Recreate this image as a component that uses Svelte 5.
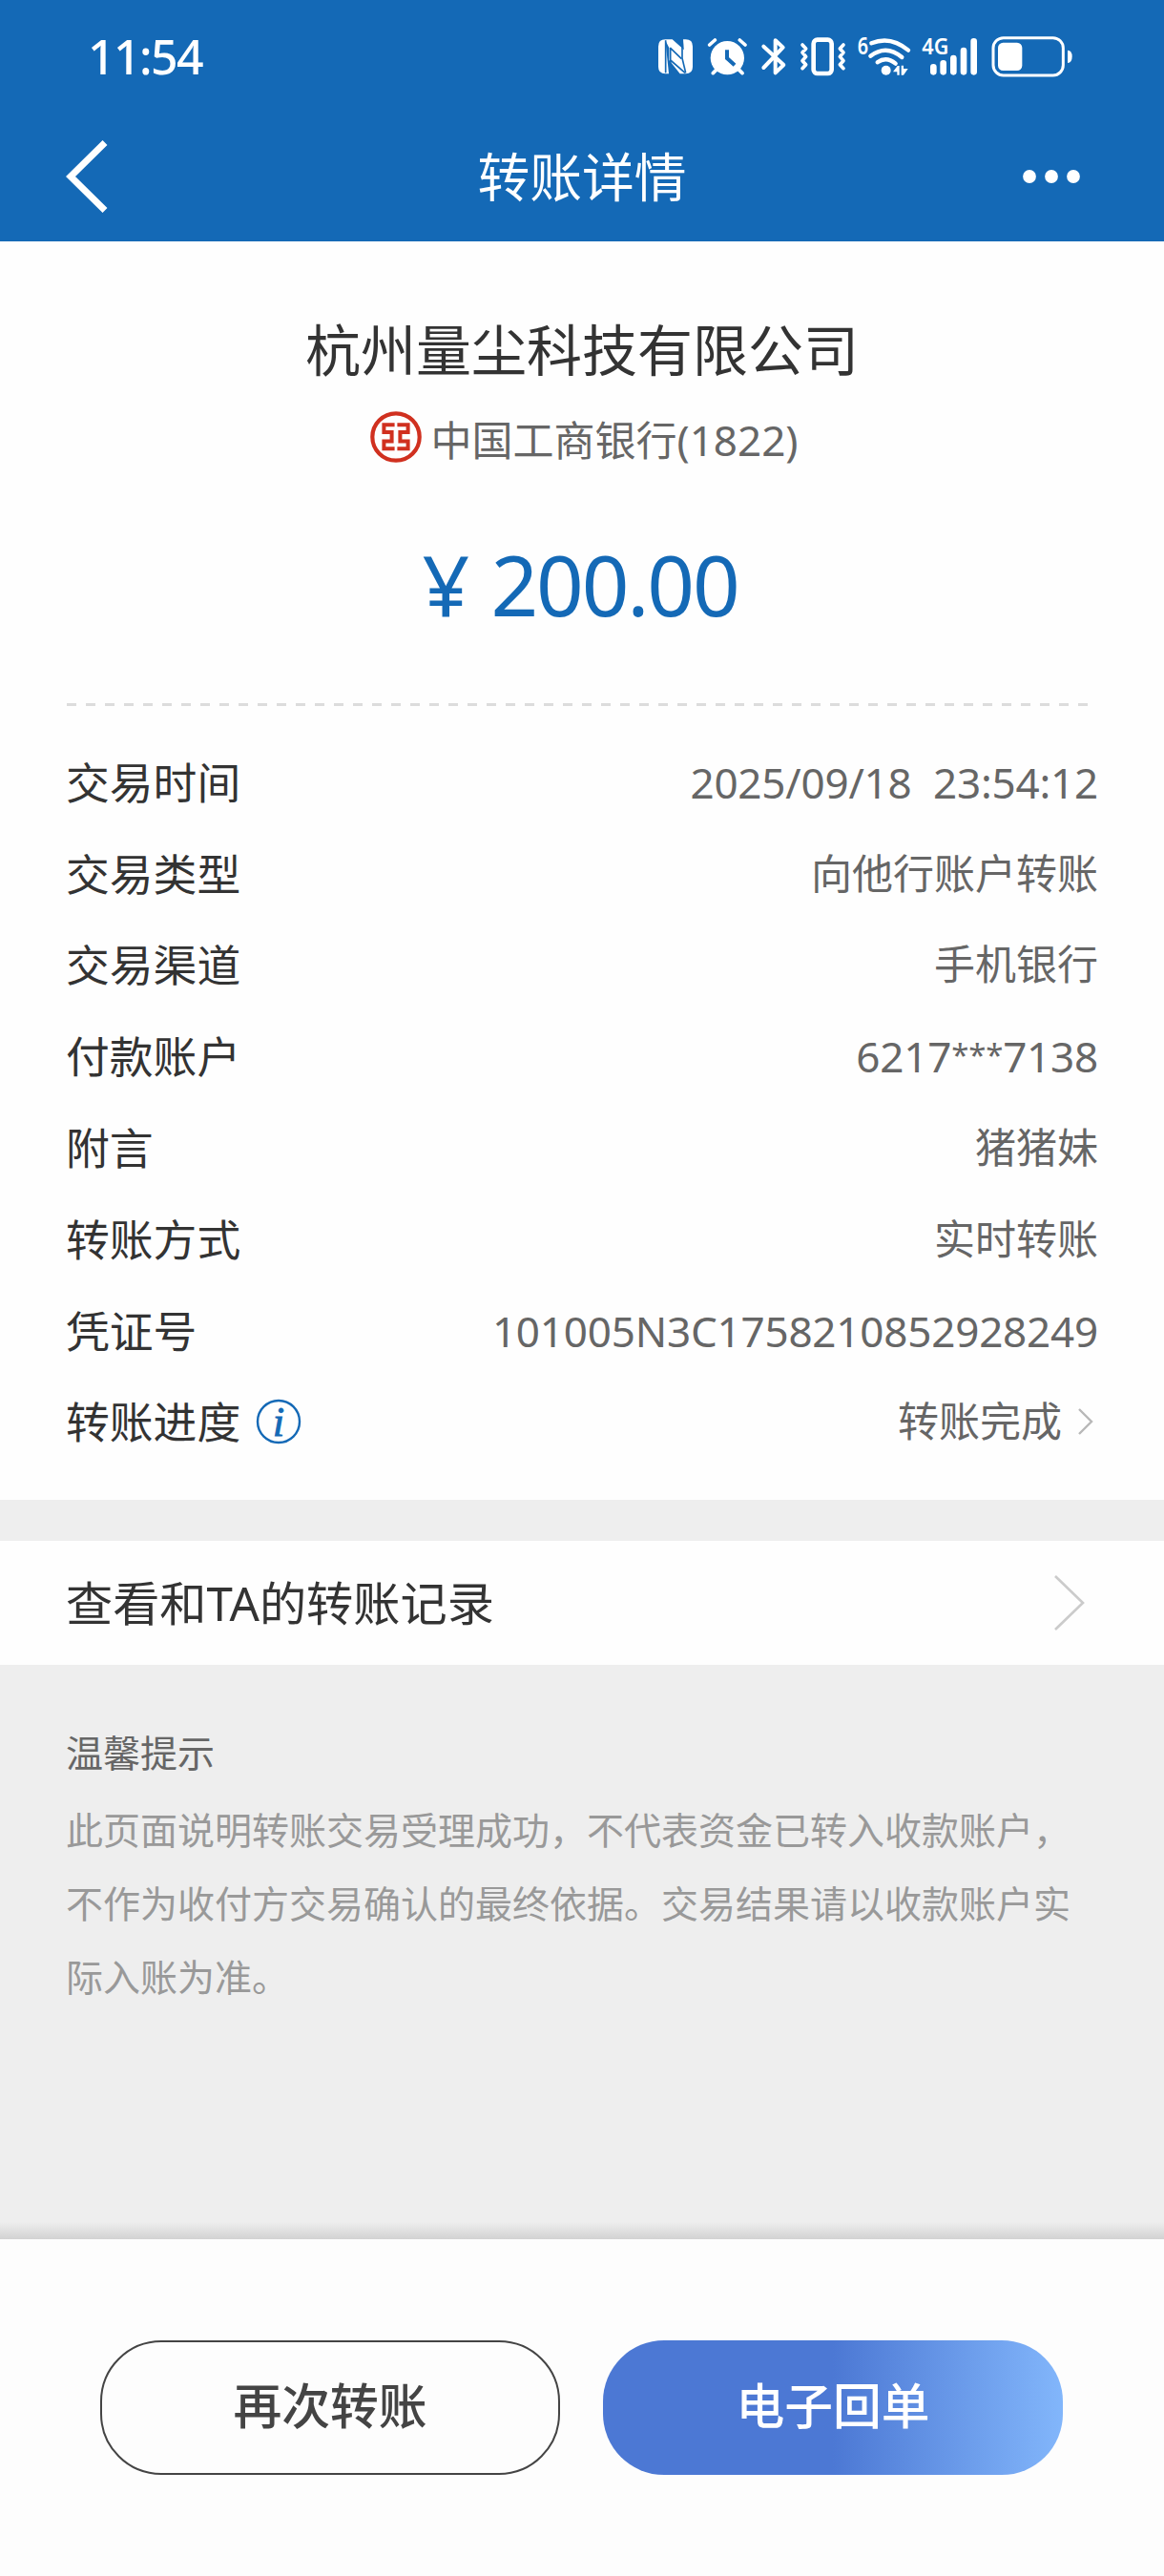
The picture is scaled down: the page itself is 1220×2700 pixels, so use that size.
<script lang="ts">
    type Row = { label: string; value: string; kind?: string };

    const rows: Row[] = [
        { label: "交易时间", value: "2025/09/18  23:54:12", kind: "date" },
        { label: "交易类型", value: "向他行账户转账" },
        { label: "交易渠道", value: "手机银行" },
        { label: "付款账户", value: "6217***7138", kind: "number" },
        { label: "附言", value: "猪猪妹" },
        { label: "转账方式", value: "实时转账" },
        { label: "凭证号", value: "101005N3C1758210852928249", kind: "number" },
    ];

    // keep masked digits apart so they can be set smaller
    function splitMask(value: string) {
        return value.split(/(\*+)/);
    }
</script>

<div class="screen">
    <header class="top">
        <div class="status-bar">
            <span class="clock">11:54</span>
            <svg class="status-icons" viewBox="90 35 1302 162" fill="none" stroke="#fff">
                <!-- nfc -->
                <g stroke="none" fill="#fff">
                    <path d="M112 63H134L176 100V171H158L124 128V90L112 66V171Q90 171 90 149V85Q90 63 112 63Z" />
                    <path d="M112 64L123 171H112Z" />
                    <path d="M168 63H176Q198 63 198 85V149Q198 171 176 171Z" />
                </g>
                <path d="M113 66V168M128 88V166M128 90L163 124M128 128L174 168" stroke="#1469b6" stroke-width="5" />
                <path d="M165 64V122L176 168" stroke="#1469b6" stroke-width="5" />
                <!-- alarm -->
                <circle cx="307" cy="121" r="53" fill="#fff" stroke="none" />
                <path d="M251 80L268 65M363 80L346 65M262 169L274 157M354 169L342 157" stroke-width="11" stroke-linecap="round" />
                <path d="M306 96V122L330 144" stroke="#1469b6" stroke-width="12" />
                <!-- bluetooth -->
                <path d="M421 85L484 143L458 168V66L482 88L421 152" stroke-width="12" stroke-linejoin="round" stroke-linecap="round" />
                <!-- vibrate -->
                <rect x="578" y="64" width="57" height="106" rx="12" stroke-width="14" />
                <path d="M543 80L554 92L543 104L554 117L543 130L554 142L543 154M672 80L661 92L672 104L661 117L672 130L661 142L672 154" stroke-width="11" stroke-linecap="round" stroke-linejoin="round" />
                <!-- wifi -->
                <text class="tiny" x="716" y="110" font-size="76" textLength="34" lengthAdjust="spacingAndGlyphs">6</text>
                <path d="M760 75Q820 50 876 97M757 115Q807 77 856 119M779 135Q807 115 836 139" stroke-width="13" stroke-linecap="round" />
                <circle cx="806" cy="160" r="15" fill="#fff" stroke="none" />
                <path d="M828 165L842 146H848V175H841V165ZM854 145H861V155H875L861 175H854Z" fill="#fff" stroke="none" />
                <!-- signal -->
                <text class="tiny" x="919" y="111" font-size="72" textLength="84" lengthAdjust="spacingAndGlyphs">4G</text>
                <path d="M955 150V165M986 138V165M1018 122V165M1050 98V165M1082 69V165" stroke-width="20" stroke-linecap="round" />
                <!-- battery -->
                <rect x="1143" y="58" width="220" height="118" rx="32" stroke-width="9" />
                <rect x="1158" y="73" width="76" height="88" rx="16" fill="#fff" stroke="none" />
                <path d="M1377 97Q1391 97 1391 117T1377 137Z" fill="#fff" stroke="none" />
            </svg>
        </div>
        <nav class="nav-bar">
            <svg class="back" viewBox="0 0 46 80">
                <path d="M41 4.5L5 40L41 75.5" fill="none" stroke="#fff" stroke-width="7" />
            </svg>
            <h1>转账详情</h1>
            <svg class="more" viewBox="0 0 60 14" fill="#fff">
                <circle cx="7" cy="7" r="6.9" />
                <circle cx="30" cy="7" r="6.9" />
                <circle cx="53" cy="7" r="6.9" />
            </svg>
        </nav>
    </header>

    <section class="summary">
        <div class="payee">杭州量尘科技有限公司</div>
        <div class="bank">
            <svg class="bank-logo" viewBox="0 0 54 54" fill="none" stroke="#d0301f">
                <circle cx="27" cy="27" r="24.7" stroke-width="4.2" />
                <path d="M25.6 14.3H14.4V22H22.6V31.6H14.4V39.3H25.6M28.4 14.3H39.6V22H31.4V31.6H39.6V39.3H28.4" stroke-width="4" />
            </svg>
            <span class="bank-name">中国工商银行<span class="digits">(1822)</span></span>
        </div>
        <div class="amount">¥ 200.00</div>
        <div class="divider"></div>
    </section>

    <section class="details">
        {#each rows as row}
            <div class="row">
                <span class="label">{row.label}</span>
                <span class="value {row.kind ?? ''}"
                    >{#each splitMask(row.value) as part}<span class:mask={part.startsWith("*")}>{part}</span>{/each}</span
                >
            </div>
        {/each}
        <div class="row">
            <span class="label">
                转账进度
                <svg class="info" viewBox="0 0 48 48">
                    <circle cx="24" cy="24" r="22" fill="none" stroke="#1469b6" stroke-width="2.4" />
                    <text x="24" y="38.5" text-anchor="middle">i</text>
                </svg>
            </span>
            <span class="value progress">
                转账完成
                <svg class="chevron" viewBox="0 0 20 30">
                    <path d="M2 2L15 15L2 28" fill="none" stroke="#b8b8b8" stroke-width="2.4" />
                </svg>
            </span>
        </div>
    </section>

    <section class="history">
        <span>查看和TA的转账记录</span>
        <svg class="chevron-large" viewBox="0 0 34 60">
            <path d="M2 2L31 30L2 58" fill="none" stroke="#cbcbcb" stroke-width="2.6" />
        </svg>
    </section>

    <section class="tips">
        <h2>温馨提示</h2>
        <p>此页面说明转账交易受理成功，不代表资金已转入收款账户，不作为收付方交易确认的最终依据。交易结果请以收款账户实际入账为准。</p>
    </section>

    <footer class="actions">
        <button class="outline">再次转账</button>
        <button class="filled">电子回单</button>
    </footer>
</div>

<style>
    :global(body) {
        background: #eee;
    }

    .screen {
        display: flex;
        flex-direction: column;
        width: 1220px;
        height: 2700px;
        background: #eee;
        color: #333;
        font-family: "Noto Sans", "Noto Sans CJK SC", sans-serif;
    }

    .top {
        height: 253px;
        background: #1469b6;
        color: #fff;
    }

    .status-bar {
        display: flex;
        align-items: center;
        justify-content: space-between;
        height: 118px;
        padding: 0 96px 0 92px;
        box-sizing: border-box;
    }

    .clock {
        font-size: 50px;
        font-weight: 500;
        line-height: 60px;
        letter-spacing: -1.6px;
    }

    .status-icons {
        width: 434px;
        height: 54px;
    }

    .tiny {
        fill: #fff;
        stroke: none;
        font-family: "Noto Sans", sans-serif;
        font-weight: 600;
    }

    .nav-bar {
        display: grid;
        grid-template-columns: 1fr auto 1fr;
        align-items: center;
        height: 134px;
        padding: 0 88px 0 69px;
    }

    .back {
        width: 46px;
        height: 80px;
    }

    .more {
        justify-self: end;
        width: 60px;
        height: 14px;
    }

    h1 {
        margin: 0 0 0 19px;
        font-size: 54.8px;
        font-weight: 400;
        line-height: 80px;
    }

    .summary {
        display: flex;
        flex-direction: column;
        align-items: center;
        height: 488px;
        padding: 74px 70px 0;
        box-sizing: border-box;
        background: #fefefe;
    }

    .payee {
        font-size: 58px;
        line-height: 80px;
    }

    .bank {
        display: flex;
        align-items: center;
        gap: 9px;
        height: 60px;
        margin-top: 21px;
        padding-left: 5px;
        color: #666;
        font-size: 43px;
    }

    .bank-name {
        padding-top: 7px;
        line-height: 60px;
    }

    .bank-logo {
        width: 54px;
        height: 54px;
    }

    .digits {
        font-size: 44px;
    }

    .amount {
        height: 120px;
        margin-top: 64px;
        padding-right: 4px;
        color: #1469b6;
        font-size: 87px;
        line-height: 120px;
        letter-spacing: -2.2px;
        word-spacing: 4px;
    }

    .divider {
        width: 100%;
        height: 3px;
        margin-top: 65px;
        background: repeating-linear-gradient(to right, #dcdcdc 0 10px, transparent 10px 20px);
    }

    .details {
        height: 831px;
        padding: 31px 69px 0;
        box-sizing: border-box;
        background: #fefefe;
    }

    .row {
        display: flex;
        align-items: center;
        justify-content: space-between;
        height: 95.8px;
        line-height: 60px;
    }

    .label {
        display: flex;
        align-items: center;
        gap: 16px;
        font-size: 45.8px;
    }

    .value {
        color: #666;
        font-size: 43px;
        white-space: pre;
    }

    .date,
    .number {
        font-size: 44px;
        letter-spacing: -0.2px;
    }

    .mask {
        font-size: 33px;
        line-height: 1;
        vertical-align: 6px;
    }

    .progress {
        display: flex;
        align-items: center;
        gap: 16px;
        padding-right: 2px;
        white-space: normal;
    }

    .info {
        width: 48px;
        height: 48px;
        overflow: visible;
    }

    .info text {
        fill: #1469b6;
        stroke: #1469b6;
        stroke-width: 0.8;
        font-family: "Liberation Serif", serif;
        font-size: 45px;
        font-style: italic;
    }

    .chevron {
        width: 20px;
        height: 30px;
    }

    .history {
        display: flex;
        align-items: center;
        justify-content: space-between;
        height: 130px;
        margin-top: 43px;
        padding: 0 82px 0 69px;
        background: #fefefe;
        font-size: 49.2px;
        line-height: 60px;
    }

    .chevron-large {
        width: 34px;
        height: 60px;
    }

    .tips {
        flex: 1;
        padding: 62px 70px 0 69px;
        background: linear-gradient(to top, #d2d2d2, #eee 18px);
    }

    h2 {
        margin: 0 0 12px;
        color: #666;
        font-size: 39px;
        font-weight: 400;
        line-height: 60px;
    }

    p {
        margin: 0;
        color: #999;
        font-size: 39px;
        line-height: 77px;
    }

    .actions {
        display: flex;
        justify-content: center;
        gap: 45px;
        height: 353px;
        padding: 106px 1px 0 0;
        box-sizing: border-box;
        background: #fdfdfd;
    }

    button {
        width: 482px;
        height: 141px;
        padding: 0 0 4px;
        border: none;
        border-radius: 64px;
        font-family: inherit;
        font-size: 50.8px;
        font-weight: 500;
        line-height: 60px;
    }

    .outline {
        border: 2px solid #444;
        background: #fdfdfd;
        color: #444;
    }

    .filled {
        background: linear-gradient(to right, #4c78d4 50%, #82b6fb);
        color: #fff;
    }
</style>
